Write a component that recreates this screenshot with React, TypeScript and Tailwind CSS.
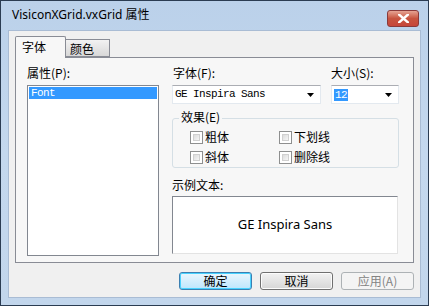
const cjk = "font-['Noto_Sans_CJK_SC','Noto_Sans',sans-serif]";
const mono = "font-['Liberation_Mono',monospace]";

function Arrow() {
	return (
		<svg width="7" height="4" viewBox="0 0 7 4" className="shrink-0">
			<path d="M0 0h7L3.5 4z" fill="#000" />
		</svg>
	);
}

function Check({ label }: { label: string }) {
	return (
		<div className="flex items-center gap-[2px] h-[20px]">
			<span className="w-[13px] h-[13px] border border-[#8e8f8f] bg-white p-[2px]">
				<span className="block w-full h-full bg-gradient-to-br from-[#dcdcdc] to-[#f6f6f6] border border-[#d0d0d0]" />
			</span>
			<span className={`${cjk} text-[12px] leading-none text-black`}>{label}</span>
		</div>
	);
}

function Combo({ width, children }: { width: string; children: React.ReactNode }) {
	return (
		<div className={`${width} h-[19px] bg-white border border-[#e3e9ef] border-t-[#abadb3] flex items-center pl-[2px] pr-[6px] justify-between`}>
			{children}
			<Arrow />
		</div>
	);
}

function Btn({ label, kind }: { label: string; kind: "default" | "normal" | "disabled" }) {
	const styles = {
		default: "border-[#3c7fb1] bg-gradient-to-b from-[#eaf6fd] to-[#bee6fd] shadow-[inset_0_0_0_1px_#48d2ff] text-black",
		normal: "border-[#707070] bg-gradient-to-b from-[#f2f2f2] to-[#d6d6d6] shadow-[inset_0_0_0_1px_#fcfcfc] text-black",
		disabled: "border-[#adb2b5] bg-[#f4f4f4] text-[#838383]",
	}[kind];
	return (
		<div className={`w-[73px] h-[18px] rounded-[3px] border flex items-center justify-center ${cjk} text-[12px] leading-none ${styles}`}>
			{label}
		</div>
	);
}

export default function App() {
	return (
		<div className="w-[429px] h-[306px] border border-[#2b3c52] flex flex-col bg-gradient-to-b from-[#bbd1ea] via-[#c4d8ee] to-[#c2d6ec]">
			{/* title bar */}
			<div className="h-[29px] flex items-start pl-[11px] pr-[9px] justify-between">
				<span className="font-['Noto_Sans','Noto_Sans_CJK_SC',sans-serif] text-[12px] text-black mt-[5px]">
					VisiconXGrid.vxGrid 属性
				</span>
				<div className="w-[32px] h-[17px] mt-[9px] rounded-[3px] border border-[#8a3a3a] bg-gradient-to-b from-[#e5a393] via-[#c7543f] to-[#c6463a] flex items-center justify-center">
					<svg width="11" height="9" viewBox="0 0 11 9">
						<path d="M1 0.5l9 8M10 0.5l-9 8" stroke="#fff" strokeWidth="2.4" strokeLinecap="square" />
					</svg>
				</div>
			</div>

			{/* client */}
			<div className="mx-[7px] mb-[7px] flex-1 bg-[#f0f0f0] border border-[#a9bcd4] flex flex-col">
				<div className="px-[6px] pt-[5px]">
					{/* tabs */}
					<div className="flex items-end h-[21px] relative z-10">
						<div className={`w-[51px] h-[22px] mb-[-1px] border border-[#898c95] border-b-0 bg-[#f7f7f7] ${cjk} text-[12px] leading-none pl-[6px] pt-[4px] rounded-t-[2px]`}>
							字体
						</div>
						<div className={`w-[44px] h-[18px] border border-[#898c95] border-l-0 bg-gradient-to-b from-[#f2f2f2] to-[#d8d8d8] ${cjk} text-[12px] leading-none pl-[4px] pt-[3px]`}>
							颜色
						</div>
					</div>
					{/* panel */}
					<div className="h-[206px] w-[399px] border border-[#898c95] bg-[#f7f7f7] flex px-[11px] pt-[8px] pb-[6px] gap-[13px]">
						<div className="flex flex-col w-[132px]">
							<div className={`${cjk} text-[12px] leading-[14px] h-[19px]`}>属性(P):</div>
							<div className="flex-1 bg-white border border-[#828790] p-[1px]">
								<div className={`${mono} text-[11px] tracking-[-0.6px] leading-[12px] h-[12px] bg-[#3399ff] text-white pl-[2px]`}>
									Font
								</div>
							</div>
						</div>
						<div className="flex flex-col w-[227px]">
							<div className="flex gap-[10px]">
								<div className="flex flex-col">
									<div className={`${cjk} text-[12px] leading-[14px] h-[19px] pl-[1px]`}>字体(F):</div>
									<Combo width="w-[149px]">
										<span className={`${mono} text-[11px] tracking-[-0.6px] leading-none`}>GE Inspira Sans</span>
									</Combo>
								</div>
								<div className="flex flex-col">
									<div className={`${cjk} text-[12px] leading-[14px] h-[19px]`}>大小(S):</div>
									<Combo width="w-[68px]">
										<span className={`${mono} text-[11px] tracking-[-0.6px] leading-[12px] bg-[#3399ff] text-white px-[1px]`}>12</span>
									</Combo>
								</div>
							</div>
							{/* effects group */}
							<div className="relative mt-[14px] h-[50px] w-[227px] border border-[#d5dfe5] rounded-[3px] flex pl-[17px] pt-[8px]">
								<span className={`absolute left-[6px] top-[-9px] bg-[#f7f7f7] px-[2px] ${cjk} text-[12px] leading-[14px]`}>效果(E)</span>
								<div className="flex flex-col w-[89px]">
									<Check label="粗体" />
									<Check label="斜体" />
								</div>
								<div className="flex flex-col">
									<Check label="下划线" />
									<Check label="删除线" />
								</div>
							</div>
							<div className={`${cjk} text-[12px] leading-[14px] mt-[10px] h-[16px]`}>示例文本:</div>
							<div className="mt-[2px] h-[58px] w-[226px] bg-white border border-[#828790] border-r-[#e3e3e3] border-b-[#e3e3e3] flex items-center justify-center">
								<span className="font-['Noto_Sans',sans-serif] text-[13px] text-black">GE Inspira Sans</span>
							</div>
						</div>
					</div>
				</div>
				{/* buttons */}
				<div className="flex justify-end gap-[8px] pr-[6px] mt-[9px]">
					<Btn label="确定" kind="default" />
					<Btn label="取消" kind="normal" />
					<Btn label="应用(A)" kind="disabled" />
				</div>
			</div>
		</div>
	);
}
